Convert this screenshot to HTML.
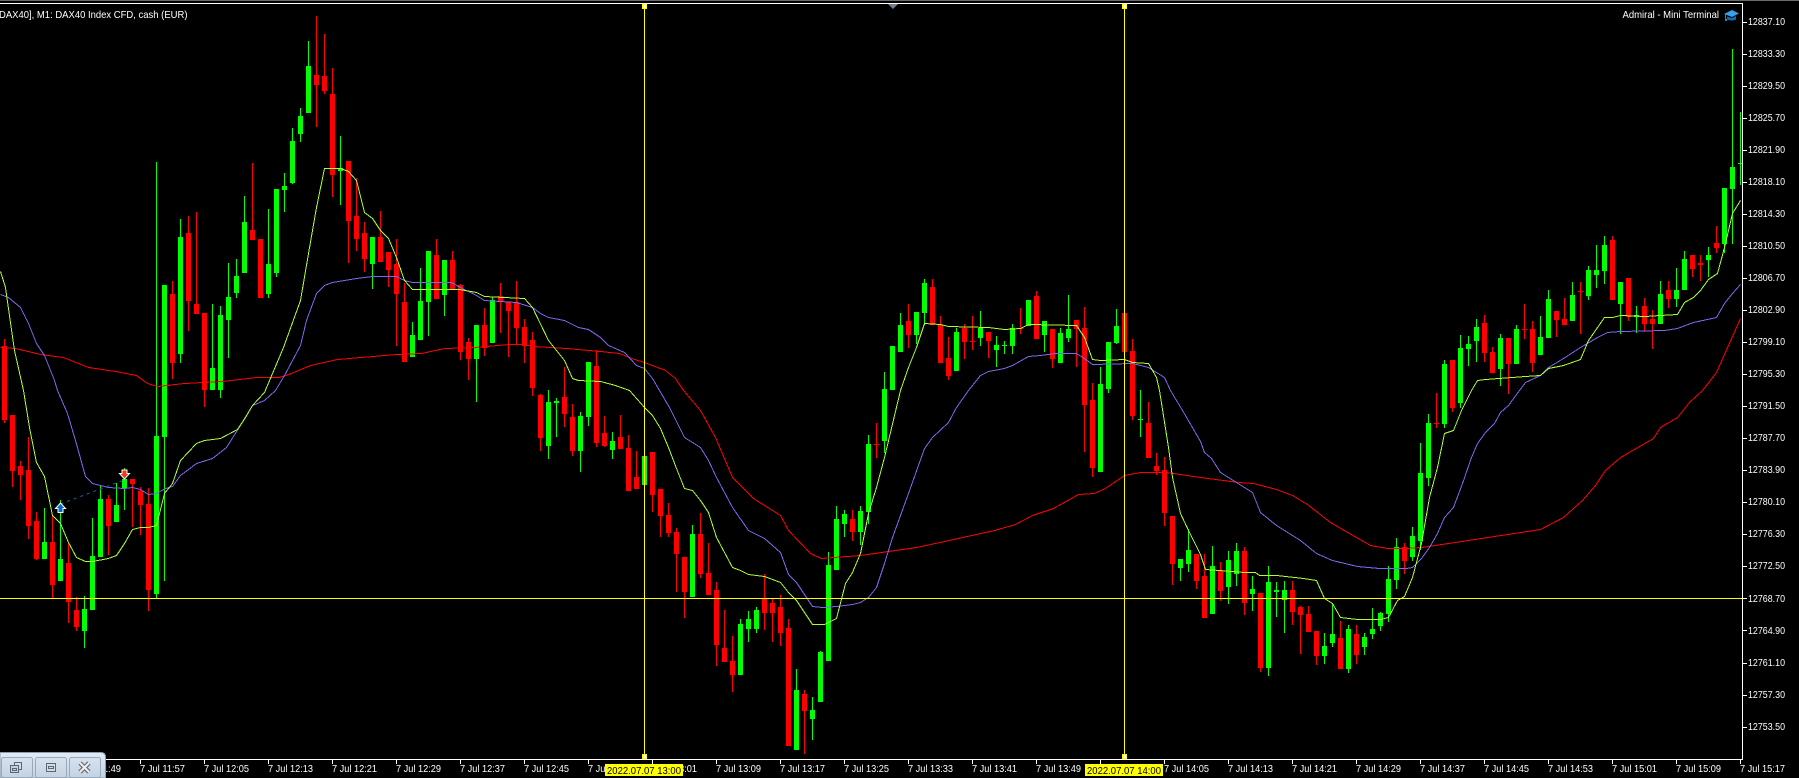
<!DOCTYPE html>
<html lang="en"><head><meta charset="utf-8"><title>DAX40 M1 chart</title>
<style>html,body{margin:0;padding:0;background:#000;width:1799px;height:778px;overflow:hidden}svg{position:absolute;left:0;top:0;display:block}text{font-family:"Liberation Sans",sans-serif;font-size:10.5px;fill:#fff}</style>
</head><body>
<svg width="1799" height="778" viewBox="0 0 1799 778" xmlns="http://www.w3.org/2000/svg">
<defs>
<linearGradient id="pg" x1="0" y1="0" x2="0" y2="1"><stop offset="0" stop-color="#e3ebf4"/><stop offset="1" stop-color="#c2d1e2"/></linearGradient>
<linearGradient id="bg" x1="0" y1="0" x2="0" y2="1"><stop offset="0" stop-color="#d7e2ee"/><stop offset="1" stop-color="#c3d2e3"/></linearGradient>
</defs>
<rect width="1799" height="778" fill="#000"/>
<rect x="0" y="0" width="1799" height="1" fill="#6a6a6a"/>

<g fill="none" shape-rendering="crispEdges">
<path stroke="#00ff00" stroke-width="1" d="M44.5 508V559M60.5 500V581M84.5 596V648M92.5 518V610M100.5 486V557M116.5 483V522M124.5 468V510M156.5 162V598M164.5 285V581M180.5 219V363M212.5 304V390M220.5 306V398M228.5 263V358M236.5 259V298M244.5 196V273M268.5 209V298M276.5 189V277M284.5 173V212M292.5 128V184M300.5 108V142M308.5 41V113M340.5 136V205M372.5 237V289M412.5 322V357M420.5 268V340M428.5 251V336M444.5 260V316M476.5 325V402M492.5 297V343M548.5 390V459M556.5 398V437M580.5 412V472M588.5 362V426M612.5 432V459M644.5 456V485M692.5 525V597M740.5 619V675M748.5 611V642M756.5 607V633M796.5 669V750M812.5 697V740M820.5 651V702M828.5 552V661M836.5 506V570M844.5 510V537M860.5 506V545M868.5 435V524M884.5 372V453M892.5 346V390M900.5 313V352M916.5 312V344M924.5 279V325M956.5 328V371M980.5 311V346M996.5 336V367M1004.5 341V354M1012.5 324V354M1028.5 300V326M1044.5 321V352M1060.5 328V363M1068.5 295V342M1100.5 367V472M1108.5 342V393M1116.5 309V344M1140.5 390V437M1180.5 559V581M1188.5 529V572M1212.5 546V614M1228.5 551V604M1236.5 543V586M1252.5 576V611M1268.5 566V676M1276.5 582V617M1284.5 581V633M1324.5 633V664M1332.5 603V647M1348.5 625V673M1364.5 633V655M1372.5 608V639M1380.5 612V631M1388.5 566V622M1396.5 538V589M1412.5 527V561M1420.5 443V550M1428.5 414V486M1444.5 360V428M1460.5 335V408M1468.5 336V366M1476.5 319V362M1500.5 334V386M1516.5 325V364M1540.5 316V355M1548.5 290V338M1572.5 282V321M1588.5 266V300M1596.5 245V288M1604.5 236V284M1620.5 282V334M1636.5 306V333M1660.5 281V324M1676.5 268V307M1684.5 251V290M1708.5 247V277M1724.5 188V253M1732.5 49V244M1740.5 112V185"/>
<path stroke="#00ff00" stroke-width="5" d="M44.5 542V559M60.5 559V581M84.5 609V631M92.5 556V610M100.5 499V557M116.5 505V522M124.5 479V488M156.5 436V594M164.5 285V437M180.5 237V354M212.5 368V390M220.5 315V390M228.5 297V320M236.5 276V293M244.5 222V273M268.5 264V294M276.5 189V273M284.5 186V190M292.5 141V183M300.5 116V134M308.5 66V113M340.5 168V171M372.5 237V264M412.5 335V357M420.5 301V340M428.5 251V302M444.5 260V295M476.5 325V359M492.5 300V343M548.5 402V446M556.5 401V403M580.5 416V451M588.5 362V417M612.5 441V450M644.5 456V485M692.5 534V597M740.5 624V675M748.5 619V629M756.5 610V629M796.5 690V750M812.5 710V719M820.5 652V702M828.5 565V661M836.5 519V570M844.5 514V524M860.5 511V532M868.5 444V512M884.5 389V441M892.5 346V390M900.5 325V352M916.5 312V335M924.5 283V313M956.5 332V371M980.5 328V338M996.5 345V350M1004.5 345V346M1012.5 328V346M1028.5 300V326M1044.5 321V335M1060.5 333V363M1068.5 329V338M1100.5 384V472M1108.5 342V389M1116.5 326V343M1140.5 419V420M1180.5 559V568M1188.5 550V564M1212.5 566V614M1228.5 560V587M1236.5 551V574M1252.5 589V594M1268.5 582V668M1276.5 590V592M1284.5 590V600M1324.5 646V656M1332.5 634V643M1348.5 629V669M1364.5 637V647M1372.5 629V634M1380.5 613V626M1388.5 579V614M1396.5 547V580M1412.5 536V557M1420.5 473V541M1428.5 423V478M1444.5 364V424M1460.5 348V403M1468.5 344V349M1476.5 327V341M1500.5 338V369M1516.5 329V364M1540.5 337V355M1548.5 299V338M1572.5 295V321M1588.5 270V296M1596.5 270V275M1604.5 245V271M1620.5 282V304M1636.5 315V317M1660.5 294V324M1676.5 290V299M1684.5 259V290M1708.5 255V260M1724.5 188V244M1732.5 167V189M1740.5 163V164"/>
<path stroke="#ff0000" stroke-width="1" d="M4.5 339V423M12.5 415V487M20.5 461V500M28.5 437V539M36.5 512V560M52.5 515V598M68.5 542V623M76.5 597V631M108.5 495V555M132.5 479V527M140.5 487V535M148.5 488V611M172.5 281V379M188.5 216V331M196.5 212V314M204.5 313V407M252.5 163V240M260.5 239V298M316.5 16V127M324.5 34V94M332.5 68V197M348.5 161V263M356.5 178V251M364.5 222V272M380.5 211V262M388.5 252V287M396.5 239V346M404.5 283V362M436.5 239V299M452.5 251V289M460.5 284V360M468.5 338V380M484.5 308V356M500.5 283V333M508.5 302V357M516.5 281V345M524.5 319V363M532.5 332V396M540.5 394V451M564.5 367V427M572.5 404V456M596.5 350V447M604.5 416V447M620.5 415V449M628.5 435V491M636.5 451V489M652.5 452V512M660.5 489V537M668.5 503V537M676.5 528V592M684.5 557V618M700.5 513V578M708.5 543V595M716.5 582V666M724.5 610V662M732.5 636V692M764.5 574V630M772.5 598V642M780.5 595V646M788.5 619V746M804.5 690V754M852.5 510V541M876.5 423V458M908.5 304V348M932.5 279V325M940.5 316V363M948.5 337V380M964.5 324V359M972.5 316V350M988.5 332V358M1020.5 308V334M1036.5 291V339M1052.5 329V368M1076.5 320V367M1084.5 307V452M1092.5 383V477M1124.5 313V352M1132.5 339V420M1148.5 402V458M1156.5 453V475M1164.5 457V526M1172.5 516V585M1196.5 554V589M1204.5 554V618M1220.5 562V601M1244.5 547V615M1260.5 593V672M1292.5 581V625M1300.5 606V654M1308.5 606V632M1316.5 631V665M1340.5 621V669M1356.5 625V664M1404.5 543V574M1436.5 393V428M1452.5 360V412M1484.5 315V362M1492.5 347V373M1508.5 338V394M1524.5 304V339M1532.5 321V372M1556.5 311V337M1564.5 298V325M1580.5 282V334M1612.5 236V300M1628.5 278V321M1644.5 298V332M1652.5 310V349M1668.5 281V308M1692.5 255V277M1700.5 255V281M1716.5 226V253"/>
<path stroke="#ff0000" stroke-width="5" d="M4.5 346V420M12.5 415V471M20.5 466V475M28.5 470V526M36.5 521V559M52.5 542V585M68.5 563V602M76.5 610V627M108.5 499V526M132.5 479V484M140.5 491V505M148.5 504V590M172.5 294V363M188.5 233V301M196.5 304V314M204.5 313V390M252.5 230V240M260.5 239V298M316.5 75V85M324.5 76V91M332.5 94V175M348.5 161V221M356.5 216V239M364.5 233V259M380.5 237V262M388.5 252V270M396.5 264V294M404.5 302V362M436.5 255V299M452.5 260V289M460.5 285V352M468.5 342V359M484.5 325V348M500.5 296V301M508.5 302V311M516.5 302V328M524.5 327V346M532.5 340V388M540.5 395V438M564.5 397V414M572.5 417V451M596.5 366V443M604.5 433V446M620.5 437V449M628.5 448V491M636.5 477V489M652.5 452V495M660.5 489V516M668.5 515V533M676.5 532V554M684.5 557V592M700.5 534V574M708.5 573V595M716.5 590V645M724.5 648V662M732.5 661V675M764.5 598V613M772.5 603V613M780.5 607V633M788.5 628V746M804.5 694V711M852.5 519V532M876.5 444V445M908.5 321V335M932.5 287V325M940.5 325V363M948.5 358V376M964.5 328V342M972.5 341V342M988.5 332V341M1020.5 328V329M1036.5 296V339M1052.5 329V359M1076.5 320V329M1084.5 328V405M1092.5 400V468M1124.5 313V352M1132.5 351V416M1148.5 423V458M1156.5 466V471M1164.5 470V513M1172.5 516V564M1196.5 554V581M1204.5 576V618M1220.5 571V591M1244.5 551V603M1260.5 593V668M1292.5 590V612M1300.5 607V615M1308.5 614V632M1316.5 631V656M1340.5 638V669M1356.5 634V655M1404.5 547V561M1436.5 423V424M1452.5 360V408M1484.5 323V353M1492.5 352V373M1508.5 338V364M1524.5 329V330M1532.5 329V363M1556.5 311V320M1564.5 319V325M1580.5 291V292M1612.5 240V300M1628.5 278V317M1644.5 306V324M1652.5 319V324M1668.5 290V299M1692.5 255V269M1700.5 263V265M1716.5 243V248"/>
</g>

<g fill="none" stroke-width="1" shape-rendering="crispEdges" transform="translate(.5 .5)">
<!-- red MA -->
<polyline stroke="#ff0000" points="0,347 15,348 40,354 63,357 88,367 115,371 136,375 147,383 157,386 184,383 222,381 256,377 279,377 291,373 310,365 337,359 396,354 421,353 444,348 474,347 509,344 524,344 532,346 566,348 600,351 619,353 634,359 644,362 665,370 675,378 683,390 700,410 715,437 732,477 753,498 780,515 788,530 810,553 821,558 833,557 860,555 881,552 916,547 944,541 994,530 1015,524 1032,515 1053,508 1078,494 1094,493 1105,488 1124,475 1140,472 1166,472 1200,477 1238,482 1253,483 1276,489 1292,495 1307,504 1330,522 1349,533 1370,545 1387,548 1406,548 1421,547 1448,543 1494,536 1540,529 1563,517 1582,500 1595,485 1605,470 1620,457 1653,438 1660,427 1677,417 1689,402 1702,390 1716,372 1728,345 1740,318"/>
<!-- blue MA -->
<polyline stroke="#7b68ee" points="0,294 8,297 20,307 28,323 36,343 44,355 54,380 57,390 67,413 75,440 85,476 92,483 108,487 124,488 132,487 140,489 148,494 156,493 165,488 172,486 180,475 196,463 212,458 226,447 238,428 252,405 264,400 275,390 284,375 300,345 306,320 316,293 324,285 332,282 356,278 372,276 396,276 404,280 412,282 451,282 460,287 476,295 484,300 516,302 532,307 540,313 548,317 564,320 578,327 588,329 600,337 608,345 624,352 636,365 644,368 652,378 659,390 669,407 684,437 700,447 708,460 716,477 732,507 748,530 764,538 780,552 788,574 796,582 812,606 822,607 836,606 852,604 860,602 868,597 876,587 884,563 892,537 908,493 924,448 932,437 948,422 956,407 968,390 980,375 988,371 1004,368 1012,365 1028,356 1040,355 1055,353 1076,353 1084,358 1092,364 1132,363 1148,367 1164,377 1170,390 1185,415 1200,441 1204,452 1211,458 1220,472 1236,482 1252,492 1260,512 1276,525 1300,540 1316,553 1332,560 1357,566 1379,568 1406,568 1412,567 1421,558 1429,547 1437,533 1444,517 1453,507 1462,483 1471,457 1477,443 1485,432 1494,423 1500,412 1508,405 1519,390 1525,382 1540,375 1548,367 1563,358 1580,347 1597,337 1607,332 1620,331 1664,330 1677,328 1693,322 1716,317 1724,303 1732,293 1740,284"/>
<!-- green-yellow MA -->
<polyline stroke="#adff2f" points="0,271 5,287 14,350 23,390 29,427 36,462 44,476 52,515 60,523 68,542 76,557 85,561 92,561 108,558 116,555 124,543 132,529 140,527 148,527 156,525 164,493 172,483 180,460 196,443 204,440 220,438 237,429 245,417 252,405 264,392 283,347 300,300 308,253 316,207 324,168 340,168 348,171 356,180 364,212 372,218 380,230 388,238 396,257 404,280 412,289 459,289 476,292 484,296 524,298 532,307 548,340 564,360 572,378 578,380 600,381 615,385 629,390 644,407 652,415 660,428 668,447 676,468 684,488 692,490 700,500 708,512 716,537 732,567 740,570 748,574 764,576 780,582 788,592 796,600 804,612 812,624 824,624 836,618 845,583 852,572 860,553 868,513 876,487 884,457 900,390 908,367 916,347 924,323 940,324 948,326 988,327 1004,329 1020,328 1028,324 1076,325 1084,337 1092,359 1100,360 1124,359 1132,362 1148,363 1156,377 1159,390 1168,447 1172,477 1180,513 1188,530 1200,554 1205,569 1219,570 1244,572 1255,572 1259,575 1276,575 1303,578 1316,580 1324,598 1332,603 1340,617 1357,619 1380,619 1388,617 1397,600 1404,596 1412,577 1421,543 1429,497 1437,467 1444,433 1453,430 1461,410 1471,390 1477,380 1485,379 1525,376 1540,375 1548,368 1563,365 1580,359 1588,340 1604,317 1612,317 1620,315 1645,316 1660,315 1677,314 1684,302 1693,297 1700,290 1708,279 1717,273 1724,247 1732,213 1740,200"/>
</g>

<!-- trade markers -->
<line x1="60.5" y1="504" x2="124" y2="480" stroke="#0a64b4" stroke-width="1" stroke-dasharray="3 4"/>
<path d="M60.5 503L65.5 508.5H63V512.5H58V508.5H55.5Z" fill="#0a6ec0" stroke="#fff" stroke-width="1"/>
<path d="M124.5 479L129.5 473.5H127V470H122V473.5H119.5Z" fill="#ee3a1a" stroke="#fff" stroke-width="1"/>

<!-- frame -->
<g fill="none" stroke="#fff" stroke-width="1" shape-rendering="crispEdges">
<path d="M0 3.5H1742.5V759.5H0"/>
<path d="M1743 22.5h4M1743 54.5h4M1743 86.5h4M1743 118.5h4M1743 150.5h4M1743 182.5h4M1743 214.5h4M1743 246.5h4M1743 278.5h4M1743 310.5h4M1743 342.5h4M1743 374.5h4M1743 406.5h4M1743 438.5h4M1743 470.5h4M1743 502.5h4M1743 534.5h4M1743 566.5h4M1743 598.5h4M1743 630.5h4M1743 663.5h4M1743 695.5h4M1743 727.5h4"/>
<path d="M76.5 760v4M140.5 760v4M204.5 760v4M268.5 760v4M332.5 760v4M396.5 760v4M460.5 760v4M524.5 760v4M588.5 760v4M652.5 760v4M716.5 760v4M780.5 760v4M844.5 760v4M908.5 760v4M972.5 760v4M1036.5 760v4M1100.5 760v4M1164.5 760v4M1228.5 760v4M1292.5 760v4M1356.5 760v4M1420.5 760v4M1484.5 760v4M1548.5 760v4M1612.5 760v4M1676.5 760v4M1740.5 760v4"/>
</g>
<path d="M888 4H898L893 9Z" fill="#708090"/>

<!-- yellow lines -->
<g stroke="#ffff00" stroke-width="1" shape-rendering="crispEdges">
<line x1="0" y1="598.5" x2="1742" y2="598.5"/>
<line x1="644.5" y1="4" x2="644.5" y2="759"/>
<line x1="1124.5" y1="4" x2="1124.5" y2="759"/>
</g>
<g fill="#fff" stroke="#ffff00" stroke-width="1" shape-rendering="crispEdges">
<rect x="642.5" y="4.5" width="4" height="4"/><rect x="1122.5" y="4.5" width="4" height="4"/>
<rect x="642.5" y="754.5" width="4" height="4"/><rect x="1122.5" y="754.5" width="4" height="4"/>
</g>

<!-- title -->
<text x="-1" y="18" textLength="188.5" lengthAdjust="spacingAndGlyphs">DAX40], M1:  DAX40 Index CFD, cash (EUR)</text>
<text x="1622.5" y="18" textLength="96.5" lengthAdjust="spacingAndGlyphs">Admiral - Mini Terminal</text>
<!-- graduation cap -->
<path d="M1724 14L1732 10L1739 13.5L1732 17Z" fill="#3aa0e8"/>
<path d="M1727 16.5V19.5Q1732 21.5 1736 19.5V16L1732 18Z" fill="#0f6cb4"/>
<path d="M1725.5 14.5V20" stroke="#2b86cc" stroke-width="1" fill="none"/>
<rect x="1725" y="19" width="2" height="2" fill="#2b86cc"/>

<!-- price axis -->
<g>
<text x="1748" y="25" textLength="37" lengthAdjust="spacingAndGlyphs">12837.10</text>
<text x="1748" y="57" textLength="37" lengthAdjust="spacingAndGlyphs">12833.30</text>
<text x="1748" y="89" textLength="37" lengthAdjust="spacingAndGlyphs">12829.50</text>
<text x="1748" y="121" textLength="37" lengthAdjust="spacingAndGlyphs">12825.70</text>
<text x="1748" y="153" textLength="37" lengthAdjust="spacingAndGlyphs">12821.90</text>
<text x="1748" y="185" textLength="37" lengthAdjust="spacingAndGlyphs">12818.10</text>
<text x="1748" y="217" textLength="37" lengthAdjust="spacingAndGlyphs">12814.30</text>
<text x="1748" y="249" textLength="37" lengthAdjust="spacingAndGlyphs">12810.50</text>
<text x="1748" y="281" textLength="37" lengthAdjust="spacingAndGlyphs">12806.70</text>
<text x="1748" y="313" textLength="37" lengthAdjust="spacingAndGlyphs">12802.90</text>
<text x="1748" y="345" textLength="37" lengthAdjust="spacingAndGlyphs">12799.10</text>
<text x="1748" y="377" textLength="37" lengthAdjust="spacingAndGlyphs">12795.30</text>
<text x="1748" y="409" textLength="37" lengthAdjust="spacingAndGlyphs">12791.50</text>
<text x="1748" y="441" textLength="37" lengthAdjust="spacingAndGlyphs">12787.70</text>
<text x="1748" y="473" textLength="37" lengthAdjust="spacingAndGlyphs">12783.90</text>
<text x="1748" y="505" textLength="37" lengthAdjust="spacingAndGlyphs">12780.10</text>
<text x="1748" y="537" textLength="37" lengthAdjust="spacingAndGlyphs">12776.30</text>
<text x="1748" y="569" textLength="37" lengthAdjust="spacingAndGlyphs">12772.50</text>
<text x="1748" y="602" textLength="37" lengthAdjust="spacingAndGlyphs">12768.70</text>
<text x="1748" y="634" textLength="37" lengthAdjust="spacingAndGlyphs">12764.90</text>
<text x="1748" y="666" textLength="37" lengthAdjust="spacingAndGlyphs">12761.10</text>
<text x="1748" y="698" textLength="37" lengthAdjust="spacingAndGlyphs">12757.30</text>
<text x="1748" y="730" textLength="37" lengthAdjust="spacingAndGlyphs">12753.50</text>
</g>

<!-- time axis -->
<g>
<text x="76" y="772" textLength="45" lengthAdjust="spacingAndGlyphs">7 Jul 11:49</text>
<text x="140" y="772" textLength="45" lengthAdjust="spacingAndGlyphs">7 Jul 11:57</text>
<text x="204" y="772" textLength="45" lengthAdjust="spacingAndGlyphs">7 Jul 12:05</text>
<text x="268" y="772" textLength="45" lengthAdjust="spacingAndGlyphs">7 Jul 12:13</text>
<text x="332" y="772" textLength="45" lengthAdjust="spacingAndGlyphs">7 Jul 12:21</text>
<text x="396" y="772" textLength="45" lengthAdjust="spacingAndGlyphs">7 Jul 12:29</text>
<text x="460" y="772" textLength="45" lengthAdjust="spacingAndGlyphs">7 Jul 12:37</text>
<text x="524" y="772" textLength="45" lengthAdjust="spacingAndGlyphs">7 Jul 12:45</text>
<text x="588" y="772" textLength="45" lengthAdjust="spacingAndGlyphs">7 Jul 12:53</text>
<text x="652" y="772" textLength="45" lengthAdjust="spacingAndGlyphs">7 Jul 13:01</text>
<text x="716" y="772" textLength="45" lengthAdjust="spacingAndGlyphs">7 Jul 13:09</text>
<text x="780" y="772" textLength="45" lengthAdjust="spacingAndGlyphs">7 Jul 13:17</text>
<text x="844" y="772" textLength="45" lengthAdjust="spacingAndGlyphs">7 Jul 13:25</text>
<text x="908" y="772" textLength="45" lengthAdjust="spacingAndGlyphs">7 Jul 13:33</text>
<text x="972" y="772" textLength="45" lengthAdjust="spacingAndGlyphs">7 Jul 13:41</text>
<text x="1036" y="772" textLength="45" lengthAdjust="spacingAndGlyphs">7 Jul 13:49</text>
<text x="1100" y="772" textLength="45" lengthAdjust="spacingAndGlyphs">7 Jul 13:57</text>
<text x="1164" y="772" textLength="45" lengthAdjust="spacingAndGlyphs">7 Jul 14:05</text>
<text x="1228" y="772" textLength="45" lengthAdjust="spacingAndGlyphs">7 Jul 14:13</text>
<text x="1292" y="772" textLength="45" lengthAdjust="spacingAndGlyphs">7 Jul 14:21</text>
<text x="1356" y="772" textLength="45" lengthAdjust="spacingAndGlyphs">7 Jul 14:29</text>
<text x="1420" y="772" textLength="45" lengthAdjust="spacingAndGlyphs">7 Jul 14:37</text>
<text x="1484" y="772" textLength="45" lengthAdjust="spacingAndGlyphs">7 Jul 14:45</text>
<text x="1548" y="772" textLength="45" lengthAdjust="spacingAndGlyphs">7 Jul 14:53</text>
<text x="1612" y="772" textLength="45" lengthAdjust="spacingAndGlyphs">7 Jul 15:01</text>
<text x="1676" y="772" textLength="45" lengthAdjust="spacingAndGlyphs">7 Jul 15:09</text>
<text x="1740" y="772" textLength="45" lengthAdjust="spacingAndGlyphs">7 Jul 15:17</text>
</g>

<!-- yellow time labels -->
<rect x="605" y="764" width="78" height="12" fill="#ffff00"/>
<rect x="1085" y="764" width="78" height="12" fill="#ffff00"/>
<text x="607" y="774" textLength="74" lengthAdjust="spacingAndGlyphs" style="fill:#000">2022.07.07 13:00</text>
<text x="1087" y="774" textLength="74" lengthAdjust="spacingAndGlyphs" style="fill:#000">2022.07.07 14:00</text>

<!-- window buttons panel -->
<path d="M0 752.5H101Q105.5 752.5 105.5 757V778H0Z" fill="url(#pg)" stroke="#8d9cad" stroke-width="1"/>
<rect x="1.5" y="757.5" width="31" height="20" rx="2" fill="url(#bg)" stroke="#96a9bf"/>
<rect x="35.5" y="757.5" width="31" height="20" rx="2" fill="url(#bg)" stroke="#96a9bf"/>
<rect x="69.5" y="757.5" width="31" height="20" rx="2" fill="url(#bg)" stroke="#96a9bf"/>
<g fill="none" stroke="#5e6672" stroke-width="1" shape-rendering="crispEdges">
<rect x="14.5" y="762.5" width="7" height="7"/>
<rect x="10.5" y="765.5" width="8" height="7" fill="#c3d0de"/>
<rect x="12.5" y="768.5" width="4" height="2"/>
<rect x="46.5" y="763.5" width="9" height="8" fill="#d5dbe2"/>
<rect x="48.5" y="766.5" width="5" height="2"/>
</g>
<path d="M80 763L89 772M89 763L80 772" stroke="#6a7079" stroke-width="4.5" fill="none"/>
<path d="M80 763L89 772M89 763L80 772" stroke="#eeeeee" stroke-width="2" fill="none"/>
</svg>
</body></html>
